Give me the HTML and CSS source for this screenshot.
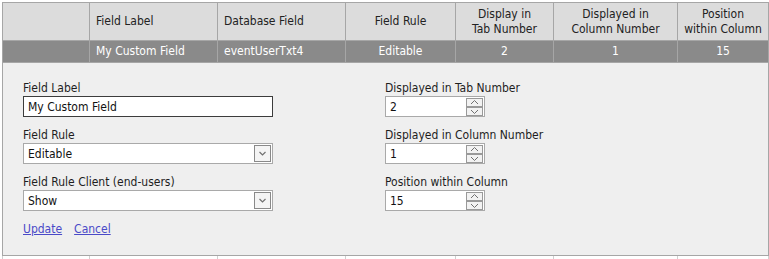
FILE: index.html
```html
<!DOCTYPE html>
<html>
<head>
  <meta charset="UTF-8">
  <title>Custom Fields</title>
  <link rel="stylesheet" href="styles.css">
</head>
<body>
  <table class="grid">
    <colgroup>
      <col class="c-sel">
      <col class="c-label">
      <col class="c-db">
      <col class="c-rule">
      <col class="c-tab">
      <col class="c-col">
      <col class="c-pos">
    </colgroup>
    <tr class="head">
      <th></th>
      <th class="left">Field Label</th>
      <th class="left">Database Field</th>
      <th>Field Rule</th>
      <th>Display in<br>Tab Number</th>
      <th>Displayed in<br>Column Number</th>
      <th>Position<br>within Column</th>
    </tr>
    <tr class="selected">
      <td></td>
      <td class="left">My Custom Field</td>
      <td class="left">eventUserTxt4</td>
      <td>Editable</td>
      <td>2</td>
      <td>1</td>
      <td>15</td>
    </tr>
    <tr class="edit-row">
      <td colspan="7">
        <div class="edit-panel">
          <div class="edit-col">
            <div class="field">
              <label for="fieldLabel">Field Label</label>
              <input type="text" id="fieldLabel" class="text-box" value="My Custom Field">
            </div>
            <div class="field">
              <label for="fieldRule">Field Rule</label>
              <select id="fieldRule" class="drop">
                <option>Editable</option>
              </select>
            </div>
            <div class="field">
              <label for="fieldRuleClient">Field Rule Client (end-users)</label>
              <select id="fieldRuleClient" class="drop">
                <option>Show</option>
              </select>
            </div>
            <div class="actions">
              <a href="#">Update</a>
              <a href="#">Cancel</a>
            </div>
          </div>
          <div class="edit-col">
            <div class="field">
              <label for="tabNumber">Displayed in Tab Number</label>
              <input type="text" id="tabNumber" class="spin" value="2">
            </div>
            <div class="field">
              <label for="colNumber">Displayed in Column Number</label>
              <input type="text" id="colNumber" class="spin" value="1">
            </div>
            <div class="field">
              <label for="position">Position within Column</label>
              <input type="text" id="position" class="spin" value="15">
            </div>
          </div>
        </div>
      </td>
    </tr>
    <tr class="plain">
      <td></td><td></td><td></td><td></td><td></td><td></td><td></td>
    </tr>
  </table>
</body>
</html>
```

FILE: styles.css
```css
/* Global styles */
html, body {
  margin: 0;
  background: #ffffff;
}
body {
  padding: 2px;
  font-family: 'DejaVu Sans Condensed', 'DejaVu Sans', sans-serif;
  font-size: 12px;
  color: #1e1e1e;
}
.grid {
  border-collapse: collapse;
  table-layout: fixed;
  width: 766px;
}
.c-sel { width: 87px; }
.c-label { width: 128px; }
.c-db { width: 128px; }
.c-rule { width: 110px; }
.c-tab { width: 98px; }
.c-col { width: 124px; }
.c-pos { width: 91px; }

.grid th,
.grid td {
  border: 1px solid #a6a6a6;
  padding: 0 6px;
  text-align: center;
  font-weight: normal;
  line-height: 15px;
  white-space: nowrap;
}
.grid .left {
  text-align: left;
}
.head th {
  height: 37px;
  background: #dcdcdc;
  color: #222222;
}
.selected td {
  height: 21px;
  background: #8a8a8a;
  color: #ffffff;
}
.edit-row td {
  padding: 0;
  text-align: left;
  background: #efefef;
}
.plain td {
  height: 20px;
  background: #ffffff;
  border-color: #d0d0d0;
}

/* Edit panel */
.edit-panel {
  display: flex;
  gap: 112px;
  padding: 18px 20px 19px;
  height: 155px;
}
.edit-col {
  display: flex;
  flex-direction: column;
}
.field {
  display: flex;
  flex-direction: column;
  margin-bottom: 11px;
}
.field label {
  line-height: 15px;
  color: #1e1e1e;
}
.text-box,
.drop,
.spin {
  box-sizing: border-box;
  height: 21px;
  margin: 0;
  padding: 0 0 0 4px;
  font-family: inherit;
  font-size: 12px;
  color: #111111;
  background-color: #ffffff;
  outline: none;
  border-radius: 0;
}
.text-box {
  width: 250px;
  border: 1px solid #3c3c3c;
}
/* Custom arrow button for dropdown */
.drop {
  width: 250px;
  border: 1px solid #a9a9a9;
  -webkit-appearance: none;
  appearance: none;
  background-image: url("data:image/svg+xml;charset=US-ASCII,%3Csvg xmlns='http://www.w3.org/2000/svg' width='17' height='17'%3E%3Crect x='0.5' y='0.5' width='16' height='16' fill='%23f4f4f4' stroke='%23898989'/%3E%3Cpolyline points='5.5,7 8.5,10 11.5,7' fill='none' stroke='%23707070' stroke-width='1.2'/%3E%3C/svg%3E");
  background-repeat: no-repeat;
  background-position: right 1px center;
}
/* Up/down spinner drawn on the number boxes */
.spin {
  width: 100px;
  border: 1px solid #a9a9a9;
  background-image: url("data:image/svg+xml;charset=US-ASCII,%3Csvg xmlns='http://www.w3.org/2000/svg' width='17' height='18'%3E%3Crect x='0.5' y='0.5' width='16' height='8' fill='%23f2f2f2' stroke='%23999999'/%3E%3Crect x='0.5' y='9.5' width='16' height='8' fill='%23f2f2f2' stroke='%23999999'/%3E%3Cpolyline points='5,6 8.5,2.5 12,6' fill='none' stroke='%23707070'/%3E%3Cpolyline points='5,12 8.5,15.5 12,12' fill='none' stroke='%23707070'/%3E%3C/svg%3E");
  background-repeat: no-repeat;
  background-position: right 1px center;
}
.actions {
  display: flex;
  gap: 12px;
  line-height: 15px;
}
.actions a {
  color: #4a4ac8;
  text-decoration: underline;
}
```
